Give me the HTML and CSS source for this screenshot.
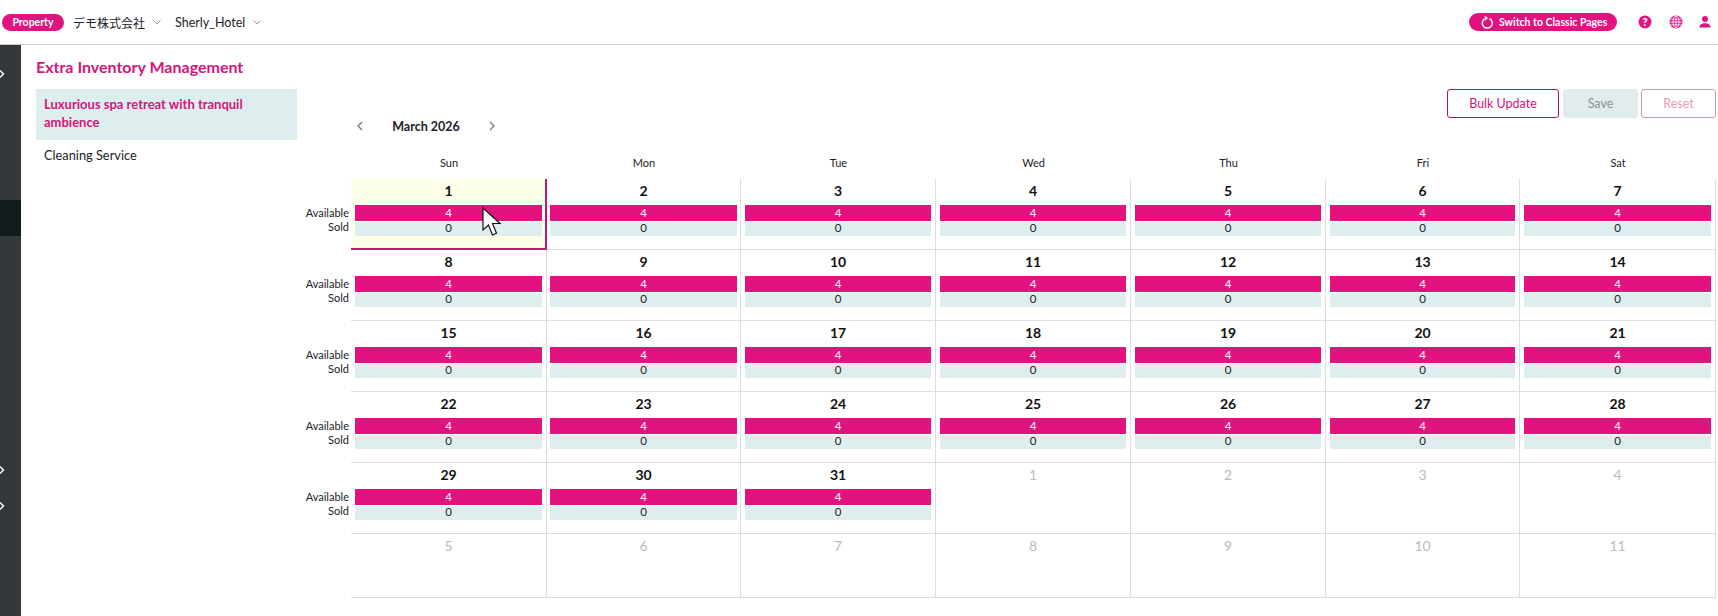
FILE: index.html
```html
<!DOCTYPE html>
<html lang="en">
<head>
<meta charset="utf-8">
<title>Extra Inventory Management</title>
<link rel="stylesheet" href="styles.css">
</head>
<body>
<header class="topbar">
  <span class="pill">Property</span>
  <span class="select select--company">デモ株式会社<svg class="caret" viewBox="0 0 8 5"><path d="M.5.5 4 4 7.500.5"/></svg></span>
  <span class="select">Sherly_Hotel<svg class="caret" viewBox="0 0 8 5"><path d="M.5.5 4 4 7.500.5"/></svg></span>
  <span class="topbar-spacer"></span>
  <span class="switch">
    <svg class="switch-icon" viewBox="0 0 12 14"><path d="M3.700 3.800a5 5 0 1 0 4.800-.2"/><path class="solid" d="M3.600 0.800 7 3 4 5.800z"/></svg>
    Switch to Classic Pages
  </span>
  <svg class="tool" viewBox="0 0 14 14"><circle class="solid" cx="7" cy="7" r="6.500"/><text class="tool-q" x="7" y="11" text-anchor="middle">?</text></svg>
  <svg class="tool tool--globe" viewBox="0 0 14 14"><circle class="solid" cx="7" cy="7" r="6.500"/><g class="globe-lines"><ellipse cx="7" cy="7" rx="3" ry="6"/><path d="M7 1v12M1 7h12M1.800 4.200h10.400M1.800 9.800h10.400"/></g></svg>
  <svg class="tool tool--user" viewBox="0 0 14 14"><circle class="solid" cx="7" cy="4" r="3"/><path class="solid" d="M1.500 12.500c0-3.200 2.500-4.300 5.500-4.300s5.500 1.100 5.500 4.300z"/></svg>
</header>
<div class="app">
  <nav class="rail">
    <div class="rail-item"><svg viewBox="0 0 5 10"><path d="M0 1.500 3.500 5 0 8.500"/></svg></div>
    <div class="rail-item"></div><div class="rail-item"></div><div class="rail-item"></div>
    <div class="rail-item rail-item--active"></div>
    <div class="rail-item"></div><div class="rail-item"></div><div class="rail-item"></div>
    <div class="rail-item"></div><div class="rail-item"></div><div class="rail-item"></div>
    <div class="rail-item"><svg viewBox="0 0 5 10"><path d="M0 1.500 3.500 5 0 8.500"/></svg></div>
    <div class="rail-item"><svg viewBox="0 0 5 10"><path d="M0 1.500 3.500 5 0 8.500"/></svg></div>
  </nav>
  <main class="content">
    <h1 class="title">Extra Inventory Management</h1>
    <div class="columns">
      <ul class="services">
        <li class="service service--active">Luxurious spa retreat with tranquil ambience</li>
        <li class="service">Cleaning Service</li>
      </ul>
      <section class="planner">
        <div class="actions">
          <button class="btn btn--bulk">Bulk Update</button>
          <button class="btn btn--save">Save</button>
          <button class="btn btn--reset">Reset</button>
        </div>
        <div class="month">
          <svg class="month-arrow" viewBox="0 0 6 10"><path d="M5 1 1 5l4 4"/></svg>
          <span class="month-name">March 2026</span>
          <svg class="month-arrow" viewBox="0 0 6 10"><path d="m1 1 4 4-4 4"/></svg>
        </div>
        <div class="weekdays">
          <span></span><span>Sun</span><span>Mon</span><span>Tue</span><span>Wed</span><span>Thu</span><span>Fri</span><span>Sat</span>
        </div>
        <div class="week">
          <div class="labels"><span>Available</span><span>Sold</span></div>
          <div class="day day--today"><b>1</b><i class="avail">4</i><i class="sold">0</i>
            <svg class="cursor" viewBox="0 0 20 29"><path d="M1 1v22l5.500-5 4 10 4-1.800-4-9.700H18z"/></svg></div>
          <div class="day"><b>2</b><i class="avail">4</i><i class="sold">0</i></div>
          <div class="day"><b>3</b><i class="avail">4</i><i class="sold">0</i></div>
          <div class="day"><b>4</b><i class="avail">4</i><i class="sold">0</i></div>
          <div class="day"><b>5</b><i class="avail">4</i><i class="sold">0</i></div>
          <div class="day"><b>6</b><i class="avail">4</i><i class="sold">0</i></div>
          <div class="day"><b>7</b><i class="avail">4</i><i class="sold">0</i></div>
        </div>
        <div class="week">
          <div class="labels"><span>Available</span><span>Sold</span></div>
          <div class="day"><b>8</b><i class="avail">4</i><i class="sold">0</i></div>
          <div class="day"><b>9</b><i class="avail">4</i><i class="sold">0</i></div>
          <div class="day"><b>10</b><i class="avail">4</i><i class="sold">0</i></div>
          <div class="day"><b>11</b><i class="avail">4</i><i class="sold">0</i></div>
          <div class="day"><b>12</b><i class="avail">4</i><i class="sold">0</i></div>
          <div class="day"><b>13</b><i class="avail">4</i><i class="sold">0</i></div>
          <div class="day"><b>14</b><i class="avail">4</i><i class="sold">0</i></div>
        </div>
        <div class="week">
          <div class="labels"><span>Available</span><span>Sold</span></div>
          <div class="day"><b>15</b><i class="avail">4</i><i class="sold">0</i></div>
          <div class="day"><b>16</b><i class="avail">4</i><i class="sold">0</i></div>
          <div class="day"><b>17</b><i class="avail">4</i><i class="sold">0</i></div>
          <div class="day"><b>18</b><i class="avail">4</i><i class="sold">0</i></div>
          <div class="day"><b>19</b><i class="avail">4</i><i class="sold">0</i></div>
          <div class="day"><b>20</b><i class="avail">4</i><i class="sold">0</i></div>
          <div class="day"><b>21</b><i class="avail">4</i><i class="sold">0</i></div>
        </div>
        <div class="week">
          <div class="labels"><span>Available</span><span>Sold</span></div>
          <div class="day"><b>22</b><i class="avail">4</i><i class="sold">0</i></div>
          <div class="day"><b>23</b><i class="avail">4</i><i class="sold">0</i></div>
          <div class="day"><b>24</b><i class="avail">4</i><i class="sold">0</i></div>
          <div class="day"><b>25</b><i class="avail">4</i><i class="sold">0</i></div>
          <div class="day"><b>26</b><i class="avail">4</i><i class="sold">0</i></div>
          <div class="day"><b>27</b><i class="avail">4</i><i class="sold">0</i></div>
          <div class="day"><b>28</b><i class="avail">4</i><i class="sold">0</i></div>
        </div>
        <div class="week">
          <div class="labels"><span>Available</span><span>Sold</span></div>
          <div class="day"><b>29</b><i class="avail">4</i><i class="sold">0</i></div>
          <div class="day"><b>30</b><i class="avail">4</i><i class="sold">0</i></div>
          <div class="day"><b>31</b><i class="avail">4</i><i class="sold">0</i></div>
          <div class="day day--muted"><b>1</b></div>
          <div class="day day--muted"><b>2</b></div>
          <div class="day day--muted"><b>3</b></div>
          <div class="day day--muted"><b>4</b></div>
        </div>
        <div class="week week--last">
          <div class="labels"></div>
          <div class="day day--muted"><b>5</b></div>
          <div class="day day--muted"><b>6</b></div>
          <div class="day day--muted"><b>7</b></div>
          <div class="day day--muted"><b>8</b></div>
          <div class="day day--muted"><b>9</b></div>
          <div class="day day--muted"><b>10</b></div>
          <div class="day day--muted"><b>11</b></div>
        </div>
      </section>
    </div>
  </main>
</div>
</body>
</html>
```
FILE: styles.css
```css
* { box-sizing: border-box; }
html, body { margin: 0; height: 616px; overflow: hidden; background: #fff; }
body { font-family: "Lato", "Noto Sans CJK JP", sans-serif; color: #1c2225; font-size: 11px; }

.topbar { display: flex; align-items: center; height: 45px; border-bottom: 1px solid #cfcec4; padding-left: 2px; padding-right: 6px; }
.pill { width: 62px; height: 17px; border-radius: 9px; background: #e2127f; color: #fff; font-size: 10.500px; line-height: 17px; font-weight: 700; text-align: center; }
.select { display: flex; align-items: center; font-size: 12.500px; margin-left: 9px; width: 102px; white-space: nowrap; }
.select--company { width: 93px; font-size: 12px; }
.caret { width: 8px; height: 5px; margin-left: 8px; fill: none; stroke: #999; stroke-width: 1; }
.topbar-spacer { flex: 1; }
.switch { display: flex; align-items: center; width: 148px; height: 18px; border-radius: 9px; background: #e2127f; color: #fff; font-size: 10.500px; font-weight: 700; padding-left: 12px; margin-right: 21px; }
.switch-icon { width: 12px; height: 14px; margin-right: 6px; fill: none; stroke: #fff; stroke-width: 1.500; }
.switch-icon .solid { fill: #fff; stroke: none; }
.tool { width: 14px; height: 14px; margin-right: 17px; }
.tool--globe { margin-right: 15px; }
.tool--user { margin-right: 0; }
.tool .solid { fill: #e2127f; }
.tool-q { fill: #fff; font-size: 11px; font-weight: 900; }
.globe-lines { fill: none; stroke: #fff; stroke-width: .8; }

.app { display: flex; height: 571px; }
.rail { width: 21px; flex: none; background: #33393b; padding-top: 11px; }
.rail-item { height: 36px; display: flex; align-items: center; }
.rail-item svg { width: 5px; height: 10px; fill: none; stroke: #fff; stroke-width: 1.400; }
.rail-item--active { background: #111a1c; }

.content { flex: 1; padding-left: 15px; }
.title { margin: 0; height: 44px; padding-top: 11px; font-size: 16px; line-height: 22px; font-weight: 700; color: #d6147a; }
.columns { display: flex; }
.services { list-style: none; margin: 0; padding: 0; width: 261px; flex: none; }
.service { padding: 6px 8px; font-size: 12.800px; line-height: 18px; }
.service--active { background: #deeeee; color: #d6147a; font-size: 13px; font-weight: 700; padding: 6px 8px 9px; }

.planner { width: 1419px; flex: none; }
.actions { display: flex; justify-content: flex-end; gap: 3px; height: 29px; }
.btn { font: 12.500px "Lato", sans-serif; border-radius: 3px; background: #fff; height: 29px; padding: 0; }
.btn--bulk { width: 112px; border: 1px solid #b5115f; color: #d6147a; margin-right: 1px; }
.btn--save { width: 75px; border: 1px solid #e2ecec; background: #e2ecec; color: #8c9090; }
.btn--reset { width: 75px; border: 1px solid #cc9ba5; color: #eb9ab0; }

.month { display: flex; align-items: center; height: 16px; padding-left: 60px; }
.month-arrow { width: 6px; height: 10px; fill: none; stroke: #777; stroke-width: 1.300; }
.month-name { font-size: 12.500px; font-weight: 700; width: 126px; text-align: center; }

.weekdays { display: grid; grid-template-columns: 54px 196px 194px 195px 195px 195px 194px 196px; margin-top: 18px; height: 27px; line-height: 22px; text-align: center; font-size: 11px; }

.week { display: grid; grid-template-columns: 54px 196px 194px 195px 195px 195px 194px 196px; height: 71px; }
.week--last { height: 64px; }
.labels { display: flex; flex-direction: column; align-items: flex-end; padding: 26px 2px 0 0; }
.labels span { height: 15px; line-height: 15px; }
.labels span + span { margin-top: -1px; }
.day { position: relative; display: flex; flex-direction: column; padding: 0 4px; border-right: 1px solid #ddd; border-bottom: 1px solid #ddd; text-align: center; }
.day:nth-child(3) { padding: 0 3px; }
.day b { height: 26px; line-height: 24px; font-size: 14px; font-weight: 700; color: #111; }
.day i { font-style: normal; font-size: 11.500px; }
.avail { height: 16px; line-height: 15px; background: #e2127f; color: #fff; }
.sold { height: 14px; line-height: 11px; margin-top: 1px; background: #deeeee; }
.day--muted b { color: #bbb; font-weight: 400; }
.day--today { background: #fdffe8; padding-right: 3px; border-right: 2px solid #c4166f; border-bottom: 2px solid #c4166f; }
.cursor { position: absolute; left: 131px; top: 28px; width: 20px; height: 29px; fill: #fff; stroke: #111; stroke-width: 1.200; }
```
